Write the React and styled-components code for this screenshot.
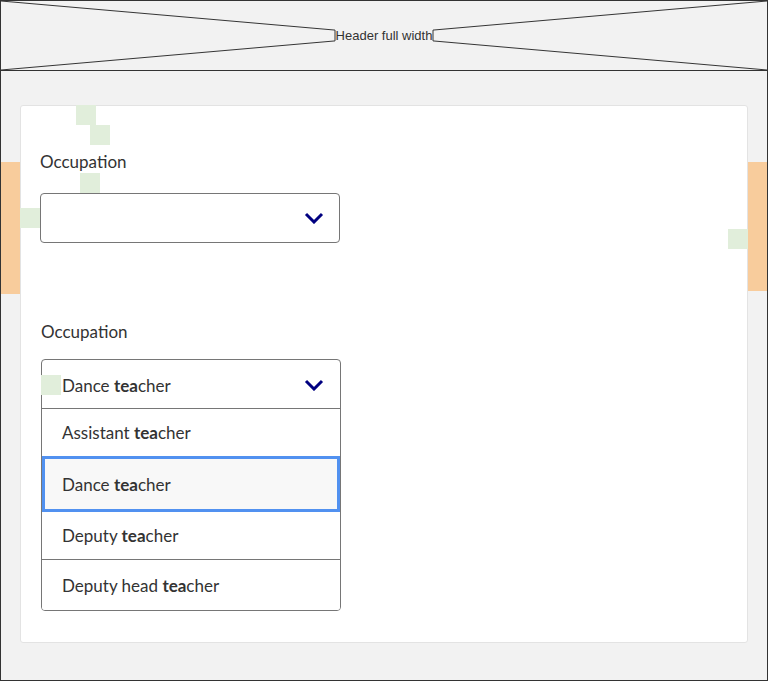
import React from "react"
import styled, { createGlobalStyle } from "styled-components"

const GlobalStyle = createGlobalStyle`
  html, body { margin: 0; padding: 0; background: #f2f2f2; }
  * { box-sizing: border-box; }
`

const Frame = styled.div`
  position: relative;
  width: 768px;
  height: 681px;
  border: 1px solid #333;
  background: #f2f2f2;
  font-family: Lato, "Noto Sans", sans-serif;
  color: #333;
  overflow: hidden;
`

const Header = styled.header`
  position: relative;
  height: 70px;
  border-bottom: 1px solid #333;
  display: flex;
  align-items: center;
  justify-content: center;
`

const HeaderLines = styled.svg`
  position: absolute;
  left: 0;
  top: 0;
  width: 100%;
  height: 100%;
`

const HeaderLabel = styled.span`
  position: relative;
  font-family: "Liberation Sans", Arial, sans-serif;
  font-size: 13px;
  line-height: 11px;
  color: #333;
`

const Main = styled.main`
  padding: 34px 19px 0 19px;
`

const Card = styled.section`
  height: 538px;
  background: #fff;
  border: 1px solid #e3e3e3;
  border-radius: 3px;
  padding: 44px 0 0 19px;
`

const Field = styled.div`
  display: flex;
  flex-direction: column;
  align-items: flex-start;
  margin-left: ${p => p.$shift || 0}px;
  margin-bottom: ${p => p.$gap || 0}px;
`

const Label = styled.label`
  font-size: 17px;
  line-height: 24px;
  color: #333;
  margin-bottom: ${p => p.$space}px;
`

const SelectBox = styled.div`
  width: 300px;
  height: 50px;
  border: 1px solid #767676;
  border-radius: 4px;
  display: flex;
  align-items: center;
  justify-content: space-between;
  padding: 0 15px 0 20px;
  font-size: 17px;
`

const Combo = styled.div`
  width: 300px;
  border: 1px solid #767676;
  border-radius: 4px;
  overflow: hidden;
  font-size: 17px;
`

const ComboInput = styled.div`
  height: 49px;
  border-bottom: 1px solid #767676;
  display: flex;
  align-items: center;
  justify-content: space-between;
  padding: 2px 16px 0 20px;
`

const Option = styled.div`
  height: ${p => p.$h}px;
  display: flex;
  align-items: center;
  padding-left: ${p => (p.$focused ? 17 : 20)}px;
  background: ${p => (p.$focused ? "#f8f8f8" : "#fff")};
  border: ${p => (p.$focused ? "3px solid #5191f0" : "none")};
  border-bottom: ${p => (p.$focused ? "3px solid #5191f0" : p.$line ? "1px solid #767676" : "none")};
`

const Match = styled.b`
  font-weight: 700;
`

const Band = styled.div`
  position: absolute;
  top: 161px;
  width: 19px;
  height: ${p => p.$h}px;
  background: #f8cc9c;
  ${p => (p.$side === "left" ? "left: 0;" : "right: 0;")}
`

const Marker = styled.div`
  position: absolute;
  width: 20px;
  height: 20px;
  background: #e1eedb;
`

const Chevron = () => (
  <svg width="20" height="12" viewBox="0 0 20 12">
    <path d="M2 2 L10 10 L18 2" fill="none" stroke="#000080" strokeWidth="3" />
  </svg>
)

const Hit = ({ pre, post }) => (
  <span>
    {pre}
    <Match>tea</Match>
    {post}
  </span>
)

const markers = [
  [75, 104],
  [89, 124],
  [79, 172],
  [19, 207],
  [727, 228],
  [40, 374],
]

export default function App() {
  return (
    <>
      <GlobalStyle />
      <Frame>
        <Header>
          <HeaderLines viewBox="0 0 766 70" preserveAspectRatio="none">
            <g stroke="#333" strokeWidth="1" fill="none">
              <path d="M0 0 L334 29.5 L334 40.5 L0 70" />
              <path d="M766 0 L432 29.5 L432 40.5 L766 70" />
            </g>
          </HeaderLines>
          <HeaderLabel>Header full width</HeaderLabel>
        </Header>
        <Main>
          <Card>
            <Field $gap={77}>
              <Label $space={19}>Occupation</Label>
              <SelectBox>
                <span />
                <Chevron />
              </SelectBox>
            </Field>
            <Field $shift={1}>
              <Label $space={15}>Occupation</Label>
              <Combo>
                <ComboInput>
                  <Hit pre="Dance " post="cher" />
                  <Chevron />
                </ComboInput>
                <Option $h={47}>
                  <Hit pre="Assistant " post="cher" />
                </Option>
                <Option $h={56} $focused>
                  <Hit pre="Dance " post="cher" />
                </Option>
                <Option $h={48} $line>
                  <Hit pre="Deputy " post="cher" />
                </Option>
                <Option $h={50}>
                  <Hit pre="Deputy head " post="cher" />
                </Option>
              </Combo>
            </Field>
          </Card>
        </Main>
        <Band $side="left" $h={132} />
        <Band $side="right" $h={129} />
        {markers.map(([x, y]) => (
          <Marker key={`${x}-${y}`} style={{ left: x, top: y }} />
        ))}
      </Frame>
    </>
  )
}
